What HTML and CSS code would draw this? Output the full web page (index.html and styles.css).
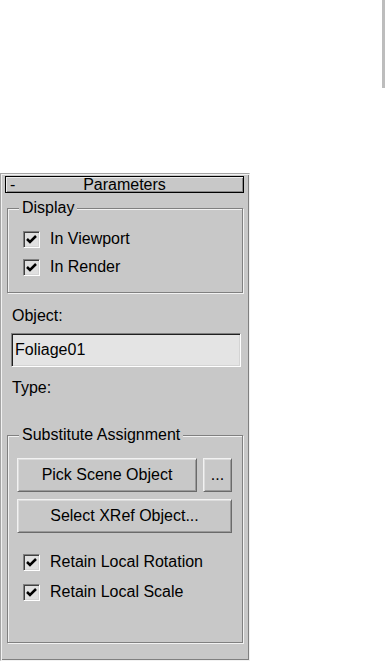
FILE: index.html
```html
<!DOCTYPE html>
<html lang="en">
<head>
    <meta charset="UTF-8">
    <meta name="viewport" content="width=device-width, initial-scale=1.0">
    <title>Parameters</title>

    <link rel="stylesheet" href="styles.css">
</head>
<body>
    <div class="strip"></div> <!-- borda da janela ao lado -->

    <div class="rollout">
        <div class="rollout-title">
            <span class="toggle">-</span>
            <span class="title-text">Parameters</span>
        </div>

        <fieldset class="group group-display">
            <legend>Display</legend>
            <label class="check-row">
                <span class="check"><svg viewBox="0 0 15 15"><path d="M3 7 L6 10 L12 4"/></svg></span>
                In Viewport
            </label>
            <label class="check-row">
                <span class="check"><svg viewBox="0 0 15 15"><path d="M3 7 L6 10 L12 4"/></svg></span>
                In Render
            </label>
        </fieldset>

        <div class="field-label">Object:</div>
        <input class="text-input" type="text" value="Foliage01">
        <div class="field-label type-label">Type:</div>

        <fieldset class="group group-subst">
            <legend>Substitute Assignment</legend>
            <div class="button-row">
                <button class="btn btn-pick">Pick Scene Object</button>
                <button class="btn btn-more">...</button>
            </div>
            <button class="btn btn-wide">Select XRef Object...</button>
            <div class="check-list">
                <label class="check-row">
                    <span class="check"><svg viewBox="0 0 15 15"><path d="M3 7 L6 10 L12 4"/></svg></span>
                    Retain Local Rotation
                </label>
                <label class="check-row">
                    <span class="check"><svg viewBox="0 0 15 15"><path d="M3 7 L6 10 L12 4"/></svg></span>
                    Retain Local Scale
                </label>
            </div>
        </fieldset>
    </div>
</body>
</html>
```

FILE: styles.css
```css
body {
    margin: 0;
    background-color: #fff;
    font-family: "Liberation Sans", Arial, sans-serif;
    font-size: 16px;
    color: #000;
}

.strip {
    width: 3px;
    height: 88px;
    margin-left: 382px;
    background-color: #bdbdbd;
}

/* painel (rollout) */
.rollout {
    box-sizing: border-box;
    width: 250px;
    height: 488px;
    margin-top: 85px;
    padding: 2px 5px 0 4px;
    background-color: #c8c8c8;
    border-top: 1px solid #a4a4a4;
    border-left: 1px solid #a4a4a4;
    border-right: 1px solid #f2f2f2;
    border-bottom: 1px solid #f2f2f2;
    box-shadow: inset 1px 1px 0 #f2f2f2, inset -1px -1px 0 #808080;
}

.rollout-title {
    box-sizing: border-box;
    width: 239px;
    height: 17px;
    border: 1px solid #000;
    background-color: #c8c8c8;
    box-shadow: inset 1px 1px 0 #ececec, inset -1px -1px 0 #8a8a8a;
    display: grid;
    grid-template-columns: 20px 1fr 20px;
    align-items: center;
    line-height: 15px;
}

.toggle {
    padding-left: 4px;
}

.title-text {
    text-align: center;
}

/* caixas de grupo */
.group {
    box-sizing: border-box;
    width: 236px;
    margin: 7px 0 0 2px;
    padding: 9px 10px 11px 9px;
    border: 1px solid #808080;
    box-shadow: 1px 1px 0 #f2f2f2, inset 1px 1px 0 #f2f2f2;
}

.group legend {
    margin-left: 2px;
    padding: 0 3px;
    line-height: 16px;
    background-color: #c8c8c8;
}

.group-subst {
    margin-top: 31px;
    padding-top: 15px;
    padding-bottom: 35px;
}

.check-row {
    display: flex;
    align-items: center;
    gap: 10px;
    height: 28px;
    padding-left: 6px;
}

.group-subst .check-row {
    height: 30px;
}

.check {
    box-sizing: border-box;
    width: 17px;
    height: 17px;
    background-color: #e0e0e0;
    border-top: 1px solid #808080;
    border-left: 1px solid #808080;
    border-right: 1px solid #fff;
    border-bottom: 1px solid #fff;
    box-shadow: inset 1px 1px 0 #404040, inset -1px -1px 0 #d4d4d4;
    display: flex;
}

.check svg {
    width: 15px;
    height: 15px;
}

.check path {
    fill: none;
    stroke: #000;
    stroke-width: 2.5;
}

.field-label {
    margin: 15px 0 0 7px;
    line-height: 16px;
}

.type-label {
    margin-top: 13px;
}

.text-input {
    box-sizing: border-box;
    display: block;
    width: 230px;
    height: 34px;
    margin: 9px 0 0 6px;
    padding: 0 0 0 3px;
    font: inherit;
    color: #000;
    background-color: #e4e4e4;
    border-top: 1px solid #808080;
    border-left: 1px solid #808080;
    border-right: 1px solid #fff;
    border-bottom: 1px solid #fff;
    box-shadow: inset 1px 1px 0 #202020, inset -1px -1px 0 #d4d4d4;
    outline: none;
}

/* botões */
.btn {
    box-sizing: border-box;
    height: 34px;
    padding: 0;
    font: inherit;
    color: #000;
    background-color: #c8c8c8;
    border-top: 1px solid #f2f2f2;
    border-left: 1px solid #f2f2f2;
    border-right: 1px solid #6a6a6a;
    border-bottom: 1px solid #6a6a6a;
    box-shadow: inset 1px 1px 0 #dcdcdc, inset -1px -1px 0 #9a9a9a;
}

.button-row {
    display: flex;
    gap: 6px;
}

.btn-pick {
    flex: 1;
}

.btn-more {
    width: 29px;
}

.btn-wide {
    display: block;
    width: 100%;
    margin-top: 7px;
}

.check-list {
    margin-top: 14px;
}
```
